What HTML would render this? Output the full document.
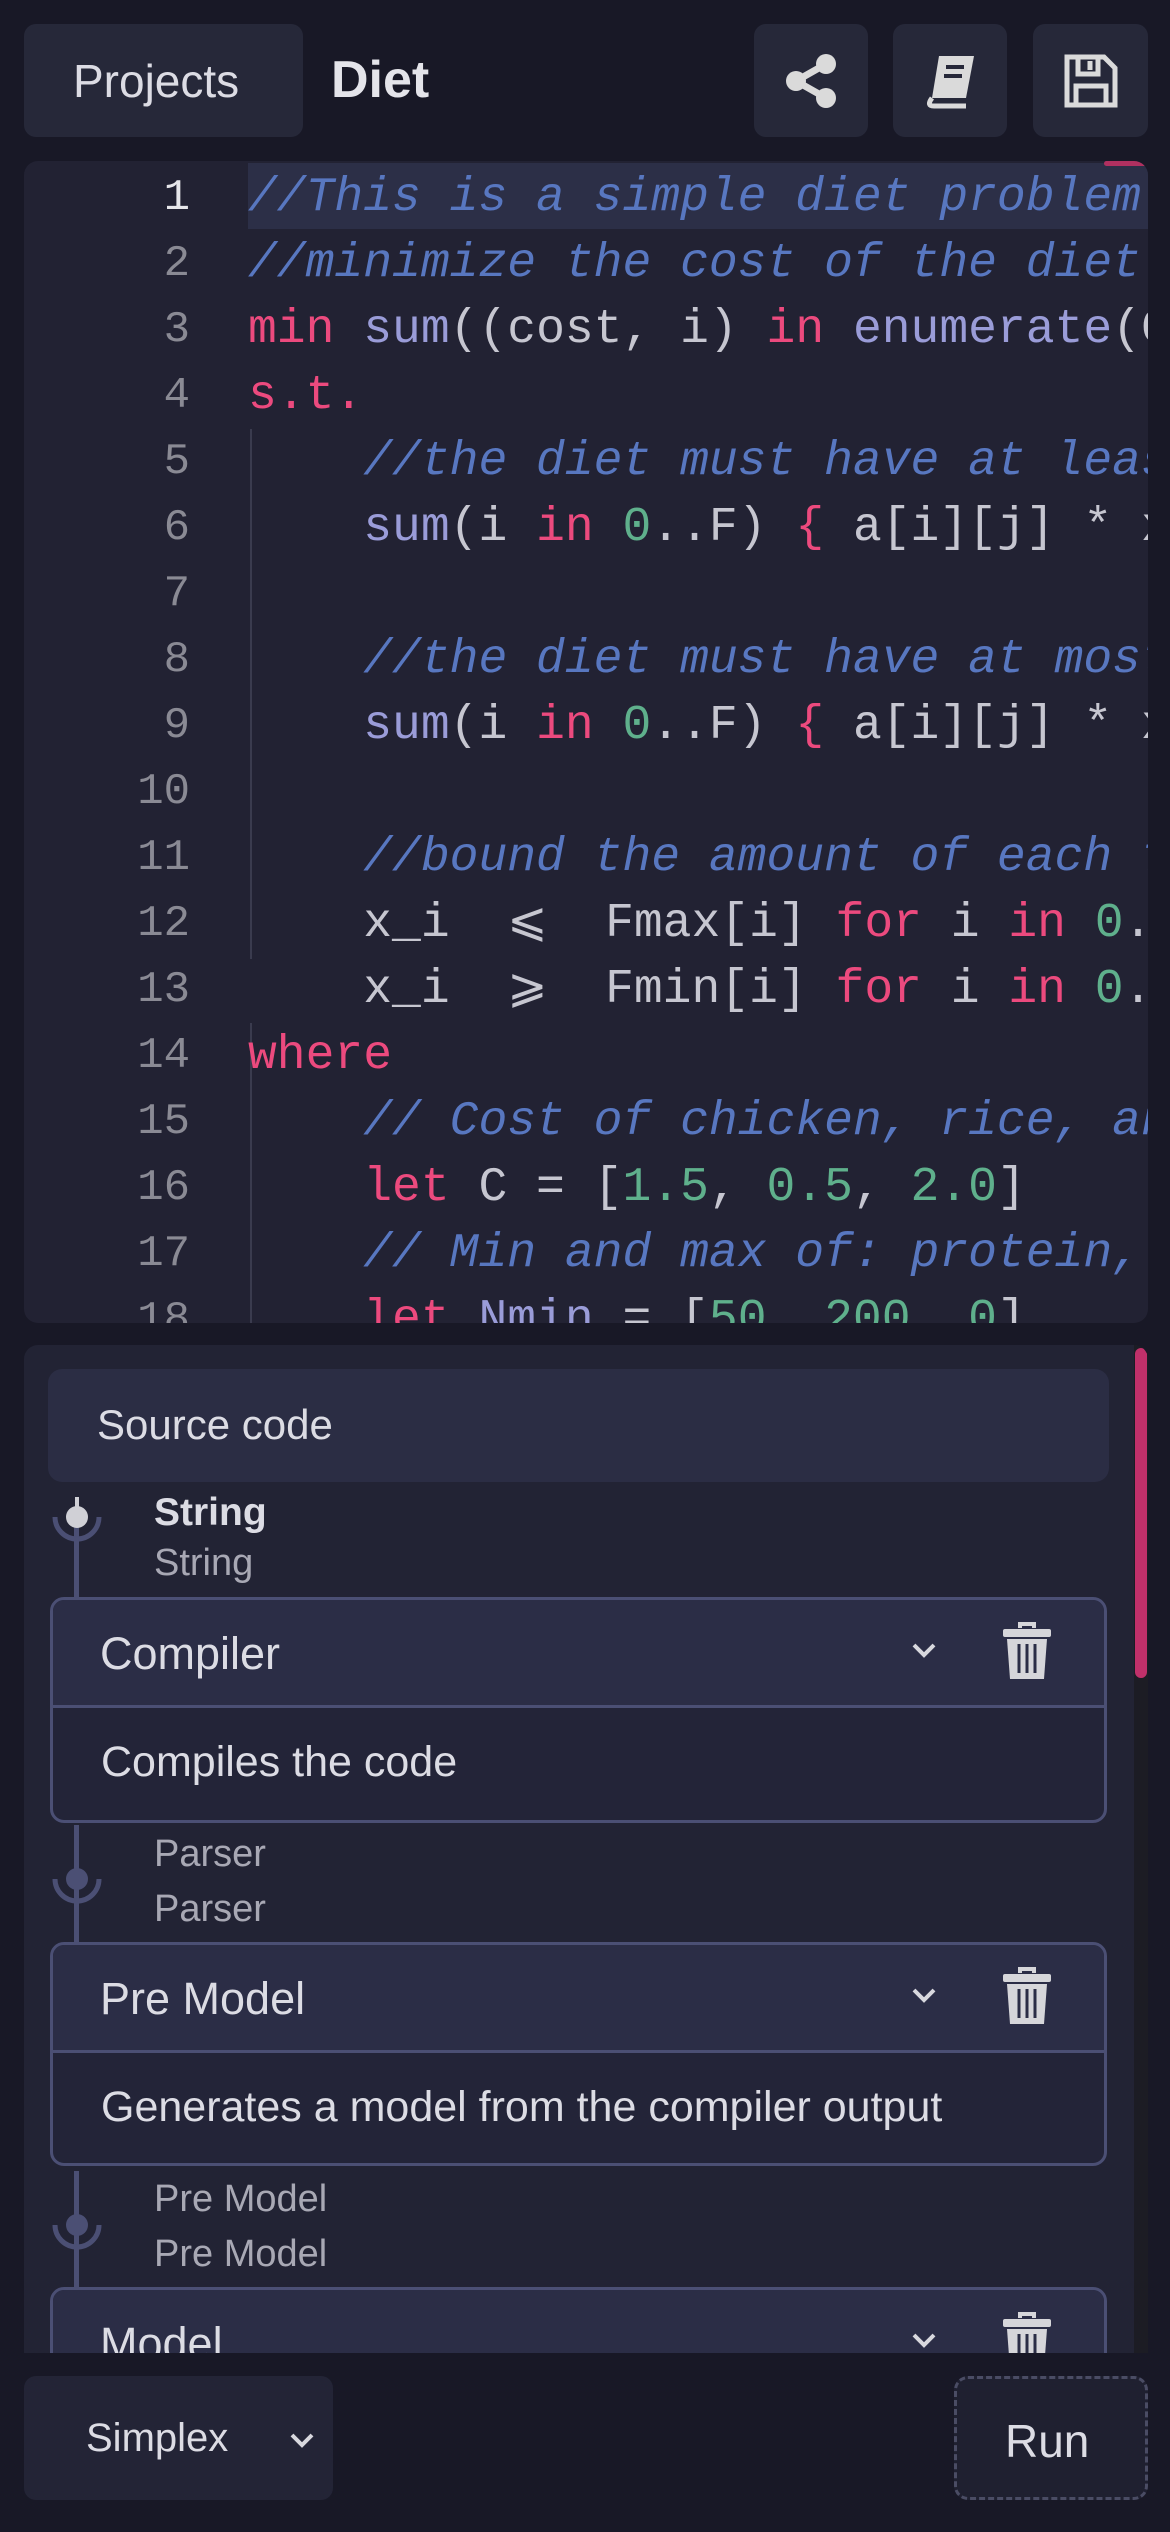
<!DOCTYPE html>
<html><head><meta charset="utf-8"><style>
*{margin:0;padding:0;box-sizing:border-box}
body{width:1170px;height:2532px;background:#181826;font-family:"Liberation Sans",sans-serif;position:relative;overflow:hidden;color:#dcdce4}
.btn{position:absolute;background:#262839;border-radius:12px}
.code{position:absolute;left:24px;top:161px;width:1124px;height:1162px;background:#222233;border-radius:14px;overflow:hidden}
.ln{position:absolute;left:0;width:166px;text-align:right;font-family:"Liberation Mono",monospace;font-size:44px;color:#8a8a94;line-height:66px}
.cl{position:absolute;left:224px;white-space:pre;font-family:"Liberation Mono",monospace;font-size:48px;line-height:66px;color:#c6c6d0}
.c{color:#5877c0;font-style:italic}.k{color:#ec4a7e}.f{color:#9a9cd8}.n{color:#5fb08c}
.panel{position:absolute;left:24px;top:1345px;width:1124px;height:1008px;background:#222334;border-radius:14px 14px 0 0;overflow:hidden}
.card{position:absolute;left:26px;width:1057px;border:3px solid #4b4f74;border-radius:14px;background:#232438;overflow:hidden}
.ch{height:108px;background:#2b2d46;border-bottom:3px solid #4b4f74;position:relative}
.ch span{position:absolute;left:47px;top:28px;font-size:45px}
.cd{position:relative;height:110px}
.cd span{position:absolute;left:48px;top:30px;font-size:43px}
.lbl{position:absolute;left:130px;font-size:38px;color:#a8a8b4}
.chev{position:absolute;left:857px;top:40px}
.trash{position:absolute;left:948px;top:22px}
</style></head><body>
<div class="btn" style="left:24px;top:24px;width:279px;height:113px"></div>
<div style="position:absolute;left:73px;top:54px;font-size:46px;color:#dcdce4">Projects</div>
<div style="position:absolute;left:331px;top:50px;font-size:52px;font-weight:bold;color:#e4e4ea">Diet</div>
<div class="btn" style="left:754px;top:24px;width:114px;height:113px"></div>
<div class="btn" style="left:893px;top:24px;width:114px;height:113px"></div>
<div class="btn" style="left:1033px;top:24px;width:115px;height:113px"></div>
<svg style="position:absolute;left:782px;top:52px" width="58" height="58" viewBox="0 0 58 58"><g fill="#dadada"><circle cx="44" cy="12" r="10"/><circle cx="14" cy="29" r="10"/><circle cx="44" cy="46" r="10"/></g><path d="M44 12L14 29L44 46" stroke="#dadada" stroke-width="7" fill="none"/></svg>
<svg style="position:absolute;left:922px;top:52px" width="58" height="58" viewBox="0 0 58 58"><path d="M17 4H52L44 46H10Z" fill="#dadada"/><path d="M10 46Q4 54 12 54H44" stroke="#dadada" stroke-width="5" fill="none"/><path d="M24 15H42M22 24H40" stroke="#262839" stroke-width="4"/></svg>
<svg style="position:absolute;left:1062px;top:52px" width="58" height="58" viewBox="0 0 58 58"><path d="M5 5H42L53 16V53H5Z" fill="none" stroke="#dadada" stroke-width="5"/><path d="M16 5V22H36V5" fill="none" stroke="#dadada" stroke-width="5"/><path d="M14 34H44V53H14Z" fill="none" stroke="#dadada" stroke-width="5"/><path d="M28 9V18" stroke="#dadada" stroke-width="5"/></svg>

<div class="code">
<div style="position:absolute;left:224px;top:2px;width:900px;height:66px;background:#2c2f47"></div>
<div style="position:absolute;left:1080px;top:0;width:44px;height:5px;background:#b03060;border-radius:3px"></div>
<div style="position:absolute;left:226px;top:268px;width:2px;height:530px;background:#3a3b4e"></div>
<div style="position:absolute;left:226px;top:862px;width:2px;height:330px;background:#3a3b4e"></div>
<div class="ln" style="top:4px;color:#e6e6ea">1</div>
<div class="ln" style="top:70px">2</div><div class="ln" style="top:136px">3</div><div class="ln" style="top:202px">4</div><div class="ln" style="top:268px">5</div><div class="ln" style="top:334px">6</div><div class="ln" style="top:400px">7</div><div class="ln" style="top:466px">8</div><div class="ln" style="top:532px">9</div><div class="ln" style="top:598px">10</div><div class="ln" style="top:664px">11</div><div class="ln" style="top:730px">12</div><div class="ln" style="top:796px">13</div><div class="ln" style="top:862px">14</div><div class="ln" style="top:928px">15</div><div class="ln" style="top:994px">16</div><div class="ln" style="top:1060px">17</div><div class="ln" style="top:1126px">18</div>
<div class="cl" style="top:4px"><span class="c">//This is a simple diet problem</span></div>
<div class="cl" style="top:70px"><span class="c">//minimize the cost of the diet</span></div>
<div class="cl" style="top:136px"><span class="k">min</span> <span class="f">sum</span>((cost, i) <span class="k">in</span> <span class="f">enumerate</span>(C</div>
<div class="cl" style="top:202px"><span class="k">s.t.</span></div>
<div class="cl" style="top:268px">    <span class="c">//the diet must have at least</span></div>
<div class="cl" style="top:334px">    <span class="f">sum</span>(i <span class="k">in</span> <span class="n">0</span>..F) <span class="k">{</span> a[i][j] * x</div>
<div class="cl" style="top:466px">    <span class="c">//the diet must have at most</span></div>
<div class="cl" style="top:532px">    <span class="f">sum</span>(i <span class="k">in</span> <span class="n">0</span>..F) <span class="k">{</span> a[i][j] * x</div>
<div class="cl" style="top:664px">    <span class="c">//bound the amount of each f</span></div>
<div class="cl" style="top:730px">    x_i  ⩽  Fmax[i] <span class="k">for</span> i <span class="k">in</span> <span class="n">0</span>..F</div>
<div class="cl" style="top:796px">    x_i  ⩾  Fmin[i] <span class="k">for</span> i <span class="k">in</span> <span class="n">0</span>..F</div>
<div class="cl" style="top:862px"><span class="k">where</span></div>
<div class="cl" style="top:928px">    <span class="c">// Cost of chicken, rice, and</span></div>
<div class="cl" style="top:994px">    <span class="k">let</span> C = [<span class="n">1.5</span>, <span class="n">0.5</span>, <span class="n">2.0</span>]</div>
<div class="cl" style="top:1060px">    <span class="c">// Min and max of: protein, c</span></div>
<div class="cl" style="top:1126px">    <span class="k">let</span> <span class="f">Nmin</span> = [<span class="n">50</span>, <span class="n">200</span>, <span class="n">0</span>]</div>
</div>

<div class="panel">
<div style="position:absolute;right:0;top:0;width:14px;height:1008px;background:#1c1c24"></div>
<div style="position:absolute;right:1px;top:3px;width:12px;height:330px;background:#c0306a;border-radius:6px"></div>
<div style="position:absolute;left:24px;top:24px;width:1061px;height:113px;background:#2b2d44;border-radius:14px"></div>
<div style="position:absolute;left:73px;top:56px;font-size:42px;color:#dcdce4">Source code</div>
<div style="position:absolute;left:50px;top:170px;width:5px;height:85px;background:#4b4f74"></div>
<div style="position:absolute;left:50px;top:480px;width:5px;height:120px;background:#4b4f74"></div>
<div style="position:absolute;left:50px;top:826px;width:5px;height:120px;background:#4b4f74"></div>
<svg style="position:absolute;left:27px;top:148px" width="52" height="60"><path d="M4 24A22 22 0 0 0 48 24" stroke="#4b4f74" stroke-width="5" fill="none"/><circle cx="26" cy="24" r="11" fill="#d0d0d6"/><path d="M26 4V20" stroke="#d0d0d6" stroke-width="4"/></svg>
<svg style="position:absolute;left:27px;top:510px" width="52" height="60"><path d="M4 24A22 22 0 0 0 48 24" stroke="#4b4f74" stroke-width="5" fill="none"/><circle cx="26" cy="24" r="11" fill="#4b4f74"/></svg>
<svg style="position:absolute;left:27px;top:856px" width="52" height="60"><path d="M4 24A22 22 0 0 0 48 24" stroke="#4b4f74" stroke-width="5" fill="none"/><circle cx="26" cy="24" r="11" fill="#4b4f74"/></svg>
<div class="lbl" style="top:146px;font-weight:bold;color:#dcdce4;font-size:39px">String</div>
<div class="lbl" style="top:197px">String</div>
<div class="lbl" style="top:488px">Parser</div>
<div class="lbl" style="top:543px">Parser</div>
<div class="lbl" style="top:833px">Pre Model</div>
<div class="lbl" style="top:888px">Pre Model</div>

<div class="card" style="top:252px;height:226px"><div class="ch"><span>Compiler</span>
<svg class="chev" width="28" height="20" viewBox="0 0 28 20"><path d="M4 5L14 15L24 5" stroke="#d8d8de" stroke-width="4" fill="none"/></svg>
<svg class="trash" width="52" height="60" viewBox="0 0 52 60"><path d="M19 6V2H33V6" stroke="#d6d6da" stroke-width="4" fill="none"/><rect x="2" y="7" width="48" height="8" rx="2" fill="#d6d6da"/><path d="M6 17H46L43 57H9Z" fill="#d6d6da"/><path d="M18 22V51M26 22V51M34 22V51" stroke="#2b2d46" stroke-width="3"/></svg></div>
<div class="cd"><span>Compiles the code</span></div></div>

<div class="card" style="top:597px;height:224px"><div class="ch"><span>Pre Model</span>
<svg class="chev" width="28" height="20" viewBox="0 0 28 20"><path d="M4 5L14 15L24 5" stroke="#d8d8de" stroke-width="4" fill="none"/></svg>
<svg class="trash" width="52" height="60" viewBox="0 0 52 60"><path d="M19 6V2H33V6" stroke="#d6d6da" stroke-width="4" fill="none"/><rect x="2" y="7" width="48" height="8" rx="2" fill="#d6d6da"/><path d="M6 17H46L43 57H9Z" fill="#d6d6da"/><path d="M18 22V51M26 22V51M34 22V51" stroke="#2b2d46" stroke-width="3"/></svg></div>
<div class="cd"><span>Generates a model from the compiler output</span></div></div>

<div class="card" style="top:942px;height:226px"><div class="ch"><span>Model</span>
<svg class="chev" width="28" height="20" viewBox="0 0 28 20"><path d="M4 5L14 15L24 5" stroke="#d8d8de" stroke-width="4" fill="none"/></svg>
<svg class="trash" width="52" height="60" viewBox="0 0 52 60"><path d="M19 6V2H33V6" stroke="#d6d6da" stroke-width="4" fill="none"/><rect x="2" y="7" width="48" height="8" rx="2" fill="#d6d6da"/><path d="M6 17H46L43 57H9Z" fill="#d6d6da"/><path d="M18 22V51M26 22V51M34 22V51" stroke="#2b2d46" stroke-width="3"/></svg></div></div>
</div>

<div class="btn" style="left:24px;top:2376px;width:309px;height:124px;background:#232436"></div>
<div style="position:absolute;left:86px;top:2416px;font-size:40px;color:#dcdce4">Simplex</div>
<svg style="position:absolute;left:288px;top:2430px" width="28" height="20" viewBox="0 0 28 20"><path d="M4 5L14 15L24 5" stroke="#d8d8de" stroke-width="4" fill="none"/></svg>
<div style="position:absolute;left:954px;top:2376px;width:194px;height:124px;border:3px dashed #4a4c64;border-radius:14px;background:#1f2030"></div>
<div style="position:absolute;left:1005px;top:2414px;font-size:46px;color:#dcdce4">Run</div>
</body></html>
